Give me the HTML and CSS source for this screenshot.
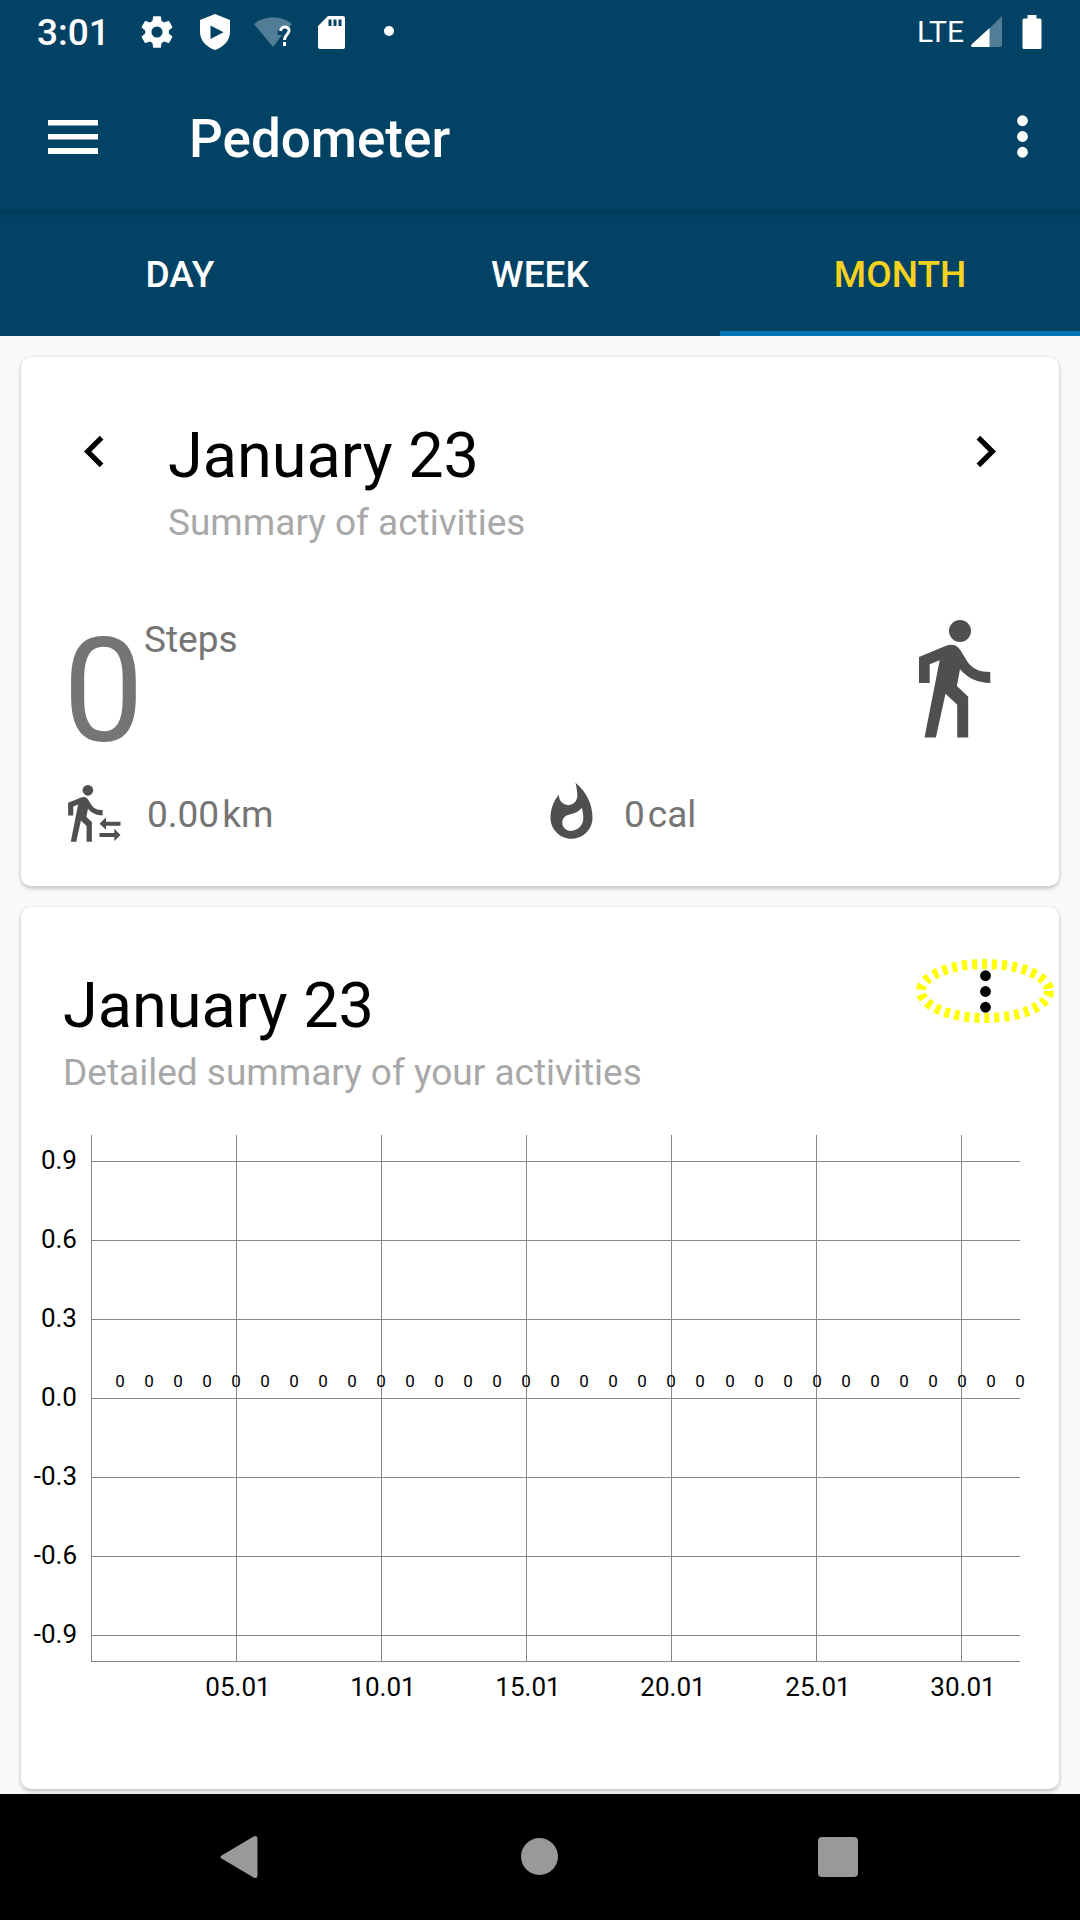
FILE: index.html
```html
<!DOCTYPE html>
<html lang="en">
<head>
<meta charset="utf-8">
<meta name="viewport" content="width=device-width, initial-scale=1">
<title>Pedometer</title>
<link rel="stylesheet" href="styles.css">
</head>
<body>
<svg class="defs" aria-hidden="true">
  <symbol id="walker" viewBox="0 0 72 118">
    <circle cx="41" cy="11" r="11"/>
    <path d="M0 37 27 25.700C33 23.500 38 24.700 41.300 30L48 41C53 49 61 52 71.300 52V63C59 63 49 58.500 41 49.300L37.900 66 49.200 76.700V117.500H38.200V84.700L26.500 73.700 16.900 117.500H5.500L20.700 40.300 10.700 44.300V63H0Z"/>
  </symbol>
</svg>

<header class="top">
  <div class="status">
    <span class="clock">3:01</span>
    <div class="status-icons">
      <svg width="38" height="38" viewBox="0 0 24 24" fill="#fff"><path d="M19.430 12.980c.040-.320.070-.640.070-.980s-.030-.660-.070-.980l2.110-1.650c.190-.150.240-.420.120-.640l-2-3.460c-.120-.220-.390-.300-.610-.220l-2.490 1c-.520-.400-1.080-.730-1.690-.980l-.380-2.650C14.460 2.180 14.250 2 14 2h-4c-.250 0-.460.180-.490.420l-.380 2.650c-.610.250-1.170.590-1.690.980l-2.490-1c-.230-.090-.490 0-.610.220l-2 3.460c-.130.220-.070.490.120.640l2.110 1.650c-.040.320-.070.650-.070.980s.030.660.070.980l-2.110 1.650c-.190.150-.240.420-.120.640l2 3.460c.120.220.390.300.610.220l2.490-1c.520.400 1.080.730 1.690.980l.380 2.650c.030.240.240.420.490.420h4c.250 0 .460-.180.490-.420l.380-2.650c.610-.250 1.170-.590 1.690-.980l2.490 1c.230.090.490 0 .610-.220l2-3.460c.120-.220.070-.490-.120-.640zM12 15.500a3.500 3.500 0 1 1 0-7 3.500 3.500 0 0 1 0 7z"/></svg>
      <svg width="38" height="38" viewBox="0 0 38 38"><path fill="#fff" fill-rule="evenodd" d="M19 1 34 7V19C34 27 28 34 19 37 10 34 4 27 4 19V7ZM14.500 12.500V26L27.500 19.200Z"/></svg>
      <svg width="38" height="38" viewBox="0 0 38 38"><path fill="#527d96" d="M0 11C11 2 27 2 38 11L35 15C28 12 22 17 24 22H28L19 34Z"/><path fill="none" stroke="#fff" stroke-width="3" d="M26.500 18C27 12.500 35.500 13 35 18 34.500 21.500 30.500 22 30.500 27M30.500 29V33"/></svg>
      <svg width="38" height="38" viewBox="0 0 38 38"><path fill="#fff" fill-rule="evenodd" d="M16 3H31Q33 3 33 5V34Q33 36 31 36H9Q6 36 6 34V13ZM16.500 6.500V13H19.500V6.500ZM21.500 6.500V13H24.500V6.500ZM26.500 6.500V13H29.500V6.500Z"/></svg>
      <svg width="38" height="38" viewBox="0 0 38 38" fill="#fff"><circle cx="19" cy="18" r="5"/></svg>
    </div>
    <div class="signal">
      <span class="network">LTE</span>
      <svg width="32" height="32" viewBox="0 0 32 32"><path fill="#527d96" d="M32 0V29Q32 31 30 31H19V13Z"/><path fill="#fff" d="M19.500 12V31H2Q0 30 2 28Z"/></svg>
    </div>
    <svg width="20" height="34" viewBox="0 0 20 34" fill="#fff"><path d="M5.500 0H14.500V3.500H18Q19.500 3.500 19.500 5V32.500Q19.500 34 18 34H2Q.500 34 .500 32.500V5Q.500 3.500 2 3.500H5.500Z"/></svg>
  </div>
  <div class="appbar">
    <button class="icon-button menu" aria-label="Open menu">
      <svg width="50" height="34" viewBox="0 0 50 34" fill="currentColor"><path d="M0 0H50V5.500H0ZM0 14H50V19.500H0ZM0 28H50V34H0Z"/></svg>
    </button>
    <h1 class="app-title">Pedometer</h1>
    <button class="icon-button" aria-label="More options">
      <svg width="63" height="63" viewBox="0 0 24 24" fill="currentColor"><circle cx="12" cy="6" r="2.050"/><circle cx="12" cy="12" r="2.050"/><circle cx="12" cy="18" r="2.050"/></svg>
    </button>
  </div>
</header>

<nav class="tabs" role="tablist">
  <button class="tab" role="tab" aria-selected="false">DAY</button>
  <button class="tab" role="tab" aria-selected="false">WEEK</button>
  <button class="tab" role="tab" aria-selected="true">MONTH</button>
</nav>

<main class="content">
  <section class="card summary">
    <div class="card-head">
      <button class="icon-button" aria-label="Previous month">
        <svg width="63" height="63" viewBox="0 0 24 24" fill="currentColor"><path d="M15.410 7.410 14 6l-6 6 6 6 1.410-1.410L10.830 12z"/></svg>
      </button>
      <div class="heading">
        <h2 class="title">January 23</h2>
        <p class="subtitle">Summary of activities</p>
      </div>
      <button class="icon-button" aria-label="Next month">
        <svg width="63" height="63" viewBox="0 0 24 24" fill="currentColor"><path d="M10 6 8.590 7.410 13.170 12l-4.580 4.590L10 18l6-6z"/></svg>
      </button>
    </div>
    <div class="steps">
      <span class="steps-count">0</span>
      <span class="steps-label">Steps</span>
      <svg class="steps-icon" width="72" height="118" aria-hidden="true"><use href="#walker"/></svg>
    </div>
    <div class="metrics">
      <div class="metric">
        <svg width="63" height="63" viewBox="0 0 63 63" aria-hidden="true"><use href="#walker" x="5" y="4" width="35" height="57"/><path d="M36.500 42.700 43 36.300V40.700H57.500V44.700H43V48.700ZM57.500 54 51.300 60V56H36.500V52H51.300V47.700Z"/></svg>
        <p class="metric-value"><span>0.00</span><span>km</span></p>
      </div>
      <div class="metric">
        <svg width="63" height="63" viewBox="0 0 24 24" aria-hidden="true"><path d="M13.500.670s.740 2.650.740 4.800c0 2.060-1.350 3.730-3.410 3.730-2.070 0-3.630-1.670-3.630-3.730l.030-.360C5.210 7.510 4 10.620 4 14c0 4.420 3.580 8 8 8s8-3.580 8-8C20 8.610 17.410 3.800 13.500.670zM11.710 19c-1.780 0-3.220-1.400-3.220-3.140 0-1.620 1.050-2.760 2.810-3.120 1.770-.360 3.600-1.210 4.620-2.580.390 1.290.590 2.650.590 4.040 0 2.650-2.150 4.800-4.800 4.800z"/></svg>
        <p class="metric-value"><span>0</span><span>cal</span></p>
      </div>
    </div>
  </section>

  <section class="card details">
    <div class="card-head">
      <div class="heading">
        <h2 class="title">January 23</h2>
        <p class="subtitle">Detailed summary of your activities</p>
      </div>
      <button class="icon-button details-menu" aria-label="Chart options">
        <svg width="63" height="63" viewBox="0 0 24 24" fill="currentColor"><circle cx="12" cy="6" r="2.050"/><circle cx="12" cy="12" r="2.050"/><circle cx="12" cy="18" r="2.050"/></svg>
        <svg class="highlight" width="140" height="66" viewBox="0 0 140 66"><ellipse cx="70" cy="33" rx="64" ry="27"/></svg>
      </button>
    </div>
    <svg class="chart" viewBox="0 0 1038 600" role="img" aria-label="Steps per day">
      <path class="grid" d="M70.500 15V541.500M215.500 15V541M360.500 15V541M505.500 15V541M650.500 15V541M795.500 15V541M940.500 15V541M70 41.500H999M70 120.500H999M70 199.500H999M70 278.500H999M70 357.500H999M70 436.500H999M70 515.500H999M70 541.500H999"/>
      <g class="axis-y">
        <text x="56" y="49">0.9</text>
        <text x="56" y="128">0.6</text>
        <text x="56" y="207">0.3</text>
        <text x="56" y="286">0.0</text>
        <text x="56" y="365">-0.3</text>
        <text x="56" y="444">-0.6</text>
        <text x="56" y="523">-0.9</text>
      </g>
      <g class="axis-x">
        <text x="217" y="576">05.01</text>
        <text x="362" y="576">10.01</text>
        <text x="507" y="576">15.01</text>
        <text x="652" y="576">20.01</text>
        <text x="797" y="576">25.01</text>
        <text x="942" y="576">30.01</text>
      </g>
      <g class="values">
        <text x="99" y="267">0</text><text x="128" y="267">0</text><text x="157" y="267">0</text><text x="186" y="267">0</text>
        <text x="215" y="267">0</text><text x="244" y="267">0</text><text x="273" y="267">0</text><text x="302" y="267">0</text>
        <text x="331" y="267">0</text><text x="360" y="267">0</text><text x="389" y="267">0</text><text x="418" y="267">0</text>
        <text x="447" y="267">0</text><text x="476" y="267">0</text><text x="505" y="267">0</text><text x="534" y="267">0</text>
        <text x="563" y="267">0</text><text x="592" y="267">0</text><text x="621" y="267">0</text><text x="650" y="267">0</text>
        <text x="679" y="267">0</text><text x="709" y="267">0</text><text x="738" y="267">0</text><text x="767" y="267">0</text>
        <text x="796" y="267">0</text><text x="825" y="267">0</text><text x="854" y="267">0</text><text x="883" y="267">0</text>
        <text x="912" y="267">0</text><text x="941" y="267">0</text><text x="970" y="267">0</text><text x="999" y="267">0</text>
      </g>
    </svg>
  </section>
</main>

<nav class="system-nav" aria-label="System">
  <button class="system-button" aria-label="Back"><svg width="44" height="44" viewBox="0 0 44 44"><path d="M2.500 20.500 35 1.300Q38.500 0 38.500 3.500V40.500Q38.500 44 35 42.700L2.500 23.500Q.500 22 2.500 20.500Z"/></svg></button>
  <button class="system-button" aria-label="Home"><svg width="44" height="44" viewBox="0 0 44 44"><circle cx="21.500" cy="21.500" r="18.500"/></svg></button>
  <button class="system-button" aria-label="Recent apps"><svg width="44" height="44" viewBox="0 0 44 44"><rect x="1" y="2" width="40" height="40" rx="4"/></svg></button>
</nav>
</body>
</html>
```
FILE: styles.css
```css
:root {
  --primary: #024264;
  --accent: #f6d21f;
  --indicator: #0277b5;
  --surface: #fff;
  --page: #fafafa;
  --text-muted: #a8a8a8;
  --text-soft: #757575;
  --icon: #4f4f4f;
}

* {
  box-sizing: border-box;
  margin: 0;
}

body {
  display: flex;
  flex-direction: column;
  min-height: 100vh;
  background: var(--page);
  color: #000;
  font-family: Roboto, "Noto Sans", sans-serif;
  font-size: 37px;
  line-height: 44px;
}

button {
  padding: 0;
  border: 0;
  background: none;
  color: inherit;
  font: inherit;
}

svg {
  display: block;
  flex: none;
}

.defs {
  position: absolute;
  width: 0;
  height: 0;
}

.top {
  position: relative;
  z-index: 1;
  background: var(--primary);
  color: #fff;
  box-shadow: 0 2px 8px rgba(0, 0, 0, 0.2);
}

.status {
  display: flex;
  align-items: center;
  height: 63px;
  padding: 0 38px 0 37px;
}

.clock {
  font-weight: 500;
  padding-top: 3px;
}

.status-icons {
  display: flex;
  gap: 20px;
  margin-left: 28px;
}

.signal {
  display: flex;
  align-items: center;
  gap: 6px;
  margin: 0 20px 0 auto;
}

.network {
  font-size: 30px;
}

.appbar {
  display: flex;
  align-items: center;
  height: 147px;
  padding: 0 26px 0 41px;
}

.icon-button {
  display: grid;
  place-items: center;
  flex: none;
  width: 63px;
  height: 63px;
}

.app-title {
  flex: 1;
  margin-left: 85px;
  padding-top: 5px;
  font-size: 53px;
  font-weight: 500;
  line-height: 63px;
}

.tabs {
  display: grid;
  grid-template-columns: repeat(3, 1fr);
  background: var(--primary);
  color: #fff;
}

.tab {
  height: 126px;
  border-bottom: 5px solid transparent;
  padding-top: 8px;
  font-weight: 500;
}

.tab[aria-selected="true"] {
  border-color: var(--indicator);
  color: var(--accent);
}

.content {
  flex: 1;
  display: flex;
  flex-direction: column;
  gap: 21px;
  padding: 21px 21px 5px;
}

.card {
  border-radius: 10px;
  background: var(--surface);
  box-shadow: 0 2px 5px rgba(0, 0, 0, 0.26);
}

.summary {
  padding: 63px 42px 42px;
}

.card-head {
  display: flex;
  align-items: flex-start;
}

.heading {
  flex: 1;
}

.summary .heading {
  margin-left: 42px;
}

.title {
  font-size: 63px;
  font-weight: 400;
  line-height: 72px;
}

.subtitle {
  margin-top: 9px;
  color: var(--text-muted);
}

.steps {
  display: flex;
  align-items: flex-start;
  margin-top: 75px;
  color: var(--text-soft);
}

.steps-count {
  font-size: 144px;
  line-height: 144px;
}

.steps-label {
  line-height: 40px;
}

.steps-icon {
  margin: 0 26px 0 auto;
  fill: var(--icon);
}

.metrics {
  display: grid;
  grid-template-columns: 1fr 1fr;
  margin-top: 17px;
}

.metric {
  display: flex;
  align-items: center;
  gap: 21px;
  fill: var(--icon);
}

.metric-value {
  display: flex;
  gap: 3px;
  padding-top: 4px;
  color: var(--text-soft);
}

.details {
  flex: 1;
  padding: 63px 0 69px;
}

.details .card-head {
  padding: 0 42px;
}

.details-menu {
  position: relative;
  margin-top: -10px;
}

.highlight {
  position: absolute;
  top: -2px;
  left: -39px;
  fill: none;
  stroke: #ff0;
  stroke-width: 10;
  stroke-dasharray: 5 5;
}

.chart {
  width: 100%;
  height: auto;
  margin-top: 25px;
}

.grid {
  fill: none;
  stroke: #888;
  shape-rendering: crispEdges;
}

.axis-y,
.axis-x {
  font-size: 26px;
}

.axis-y {
  text-anchor: end;
}

.axis-x,
.values {
  text-anchor: middle;
}

.values {
  font-size: 17px;
}

.system-nav {
  display: flex;
  justify-content: center;
  height: 126px;
  background: #000;
}

.system-button {
  display: grid;
  place-items: center;
  flex: 0 1 299px;
  fill: #999;
}
```
